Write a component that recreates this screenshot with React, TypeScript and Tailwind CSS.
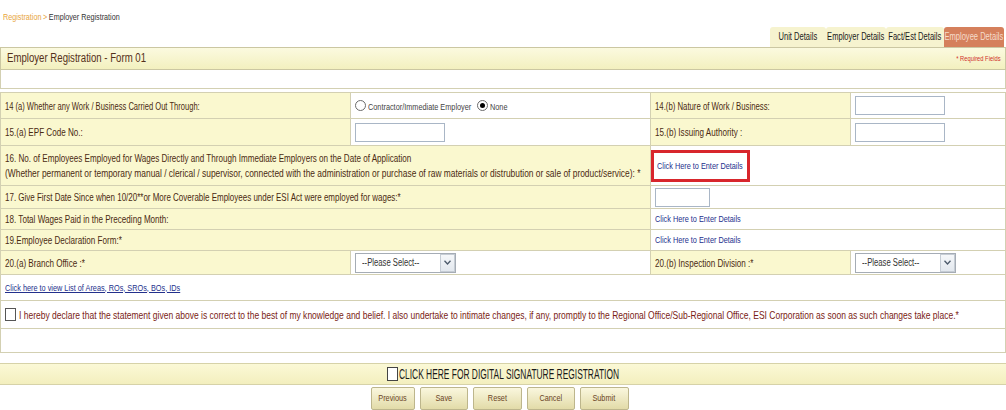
import React from 'react';

const font = "font-['Liberation_Sans',Arial,sans-serif]";

// the page text is drawn in a condensed face; Liberation Sans is squeezed to match
function T({
  children,
  className = '',
  center,
  sx = 'scale-x-[0.77]',
}: {
  children: React.ReactNode;
  className?: string;
  center?: boolean;
  sx?: string;
}) {
  return (
    <span className={`inline-block whitespace-nowrap ${sx} ${center ? 'origin-center' : 'origin-left'} ${className}`}>
      {children}
    </span>
  );
}

const labelCell = 'bg-[#faf8cf] text-[#4a2a12] text-[10.5px] border-b border-r border-[#d3d0b2] px-[4px] align-middle';
const valueCell = 'bg-white border-b border-r border-[#d3d0b2] px-[4px] align-middle';

function TextBox({ width }: { width: string }) {
  return <div className={`${width} h-[19px] border border-[#a9b6c6] bg-white`} />;
}

function Radio({ checked, label, width }: { checked?: boolean; label: string; width: string }) {
  return (
    <div className={`flex items-center gap-[2px] ${width}`}>
      <span className="shrink-0 w-[11px] h-[11px] rounded-full border border-[#6b6b6b] bg-white flex items-center justify-center">
        {checked && <span className="w-[5px] h-[5px] rounded-full bg-black" />}
      </span>
      <T className="text-[9.5px] text-[#444] mt-[3px]">{label}</T>
    </div>
  );
}

function SelectBox() {
  return (
    <div className="w-[101px] h-[20px] border border-[#a5acb5] bg-white flex items-center overflow-hidden">
      <span className="flex-1 pl-[6px]">
        <T className="text-[10px] text-[#333]">--Please Select--</T>
      </span>
      <span className="w-[15px] h-[18px] border border-[#c5ccd4] bg-gradient-to-b from-[#f5f7fa] to-[#e3e8ee] flex items-center justify-center">
        <svg width="7" height="5" viewBox="0 0 7 5">
          <path d="M0.5 0.8 L3.5 4 L6.5 0.8" fill="none" stroke="#4c5a6b" strokeWidth="1.3" />
        </svg>
      </span>
    </div>
  );
}

function DetailsLink() {
  return <T className="text-[9.5px] text-[#23308c]">Click Here to Enter Details</T>;
}

const tabs = [
  { label: 'Unit Details', active: false, width: 'w-[56px]' },
  { label: 'Employer Details', active: false, width: 'w-[60px]' },
  { label: 'Fact/Est Details', active: false, width: 'w-[58px]' },
  { label: 'Employee Details', active: true, width: 'w-[60px]' },
];

const buttons = [
  { label: 'Previous', width: 'w-[44px]' },
  { label: 'Save', width: 'w-[48px]' },
  { label: 'Reset', width: 'w-[49px]' },
  { label: 'Cancel', width: 'w-[48px]' },
  { label: 'Submit', width: 'w-[49px]' },
];

export default function App() {
  return (
    <div className={`w-[1006px] h-[410px] bg-white overflow-hidden ${font}`}>
      {/* Breadcrumb */}
      <div className="h-[27px] pl-[3px] pt-[12px] text-[9px] leading-[10px]">
        <T sx="scale-x-[0.8]">
          <span className="text-[#e8a53c]">Registration</span>
          <span className="text-[#e8a53c] mx-[2px]">&gt;</span>
          <span className="text-[#333]">Employer Registration</span>
        </T>
      </div>

      {/* Tabs */}
      <div className="h-[20px] flex justify-end pr-[2px]">
        {tabs.map((tab) => (
          <div
            key={tab.label}
            className={`${tab.width} h-full flex items-center justify-center rounded-t-[3px] ${
              tab.active ? 'bg-[#d5805c] text-[#f6dccb]' : 'bg-[#f6f3cf] text-[#1a1a1a]'
            }`}
          >
            <T center sx="scale-x-[0.72]" className="text-[10.5px]">
              {tab.label}
            </T>
          </div>
        ))}
      </div>

      {/* Form header */}
      <div className="h-[23px] border border-[#cbc7a2] bg-gradient-to-b from-[#fbfadf] to-[#f3f0bf] flex items-center justify-between pl-[6px] pr-[4px]">
        <T className="text-[12.5px] text-[#55301a]">Employer Registration - Form 01</T>
        <T className="text-[7.5px] text-[#d0302a] origin-right">* Required Fields</T>
      </div>
      <div className="h-[19px] border-x border-b border-[#d3d0b2]" />

      <table className="w-full table-fixed border-collapse mt-[3px] border-l border-[#d3d0b2] text-[10px] leading-[14px]">
        <colgroup>
          <col className="w-[350px]" />
          <col className="w-[300px]" />
          <col className="w-[200px]" />
          <col />
        </colgroup>
        <tbody>
          <tr className="h-[26px]">
            <td className={`${labelCell} border-t`}>
              <T sx="scale-x-[0.72]">14 (a) Whether any Work / Business Carried Out Through:</T>
            </td>
            <td className={`${valueCell} border-t`}>
              <div className="flex items-center">
                <Radio label="Contractor/Immediate Employer" width="w-[122px]" />
                <Radio label="None" checked width="w-[30px]" />
              </div>
            </td>
            <td className={`${labelCell} border-t`}>
              <T sx="scale-x-[0.74]">14.(b) Nature of Work / Business:</T>
            </td>
            <td className={`${valueCell} border-t`}>
              <TextBox width="w-[90px]" />
            </td>
          </tr>
          <tr className="h-[27px]">
            <td className={labelCell}>
              <T>15.(a) EPF Code No.:</T>
            </td>
            <td className={valueCell}>
              <TextBox width="w-[90px]" />
            </td>
            <td className={labelCell}>
              <T>15.(b) Issuing Authority :</T>
            </td>
            <td className={valueCell}>
              <TextBox width="w-[90px]" />
            </td>
          </tr>
          <tr className="h-[40px]">
            <td colSpan={2} className={`${labelCell} leading-[15px]`}>
              <T className="block">
                16. No. of Employees Employed for Wages Directly and Through Immediate Employers on the Date of Application
              </T>
              <T className="block" sx="scale-x-[0.8]">
                (Whether permanent or temporary manual / clerical / supervisor, connected with the administration or purchase of raw materials or distrubution or sale of product/service): *
              </T>
            </td>
            <td colSpan={2} className="bg-white border-b border-r border-[#d3d0b2] align-middle">
              <div className="w-[99px] h-[32px] border-[3px] border-[#d8262c] flex items-center pl-[3px]">
                <DetailsLink />
              </div>
            </td>
          </tr>
          <tr className="h-[23px]">
            <td colSpan={2} className={labelCell}>
              <T sx="scale-x-[0.76]">
                17. Give First Date Since when 10/20**or More Coverable Employees under ESI Act were employed for wages:*
              </T>
            </td>
            <td colSpan={2} className={valueCell}>
              <TextBox width="w-[55px]" />
            </td>
          </tr>
          <tr className="h-[21px]">
            <td colSpan={2} className={labelCell}>
              <T>18. Total Wages Paid in the Preceding Month:</T>
            </td>
            <td colSpan={2} className={valueCell}>
              <DetailsLink />
            </td>
          </tr>
          <tr className="h-[21px]">
            <td colSpan={2} className={labelCell}>
              <T>19.Employee Declaration Form:*</T>
            </td>
            <td colSpan={2} className={valueCell}>
              <DetailsLink />
            </td>
          </tr>
          <tr className="h-[24px]">
            <td className={labelCell}>
              <T>20.(a) Branch Office :*</T>
            </td>
            <td className={valueCell}>
              <SelectBox />
            </td>
            <td className={labelCell}>
              <T>20.(b) Inspection Division :*</T>
            </td>
            <td className={valueCell}>
              <SelectBox />
            </td>
          </tr>
          <tr className="h-[26px]">
            <td colSpan={4} className={valueCell}>
              <T className="text-[9.5px] text-[#23308c] underline">Click here to view List of Areas, ROs, SROs, BOs, IDs</T>
            </td>
          </tr>
          <tr className="h-[28px]">
            <td colSpan={4} className={valueCell}>
              <div className="flex items-center gap-[3px]">
                <span className="shrink-0 w-[11px] h-[13px] border border-[#555] bg-white" />
                <T sx="scale-x-[0.81]" className="text-[10.5px] text-[#7a1c14]">
                  I hereby declare that the statement given above is correct to the best of my knowledge and belief. I also undertake to intimate changes, if any, promptly to the Regional Office/Sub-Regional Office, ESI Corporation as soon as such changes take place.*
                </T>
              </div>
            </td>
          </tr>
          <tr className="h-[24px]">
            <td colSpan={4} className={valueCell} />
          </tr>
        </tbody>
      </table>

      {/* Digital signature */}
      <div className="mt-[10px] h-[22px] border-y border-[#d6d2a8] bg-gradient-to-b from-[#fbf9d6] to-[#f3efbe] flex items-center justify-center">
        <div className="w-[236px] flex items-center gap-[1px] pl-[2px]">
          <span className="shrink-0 w-[11px] h-[14px] border border-[#444] bg-white" />
          <T sx="scale-x-[0.6]" className="text-[14px] text-[#1a1a1a]">
            CLICK HERE FOR DIGITAL SIGNATURE REGISTRATION
          </T>
        </div>
      </div>

      {/* Actions */}
      <div className="mt-[2px] flex justify-center gap-[5px] pr-[7px]">
        {buttons.map((b) => (
          <button
            key={b.label}
            className={`${b.width} h-[23px] border border-[#bdb68c] rounded-[2px] bg-gradient-to-b from-[#faf7de] to-[#e2dba8] text-[#6b4526] flex items-center justify-center`}
          >
            <T center className="text-[9.5px]">
              {b.label}
            </T>
          </button>
        ))}
      </div>
    </div>
  );
}
